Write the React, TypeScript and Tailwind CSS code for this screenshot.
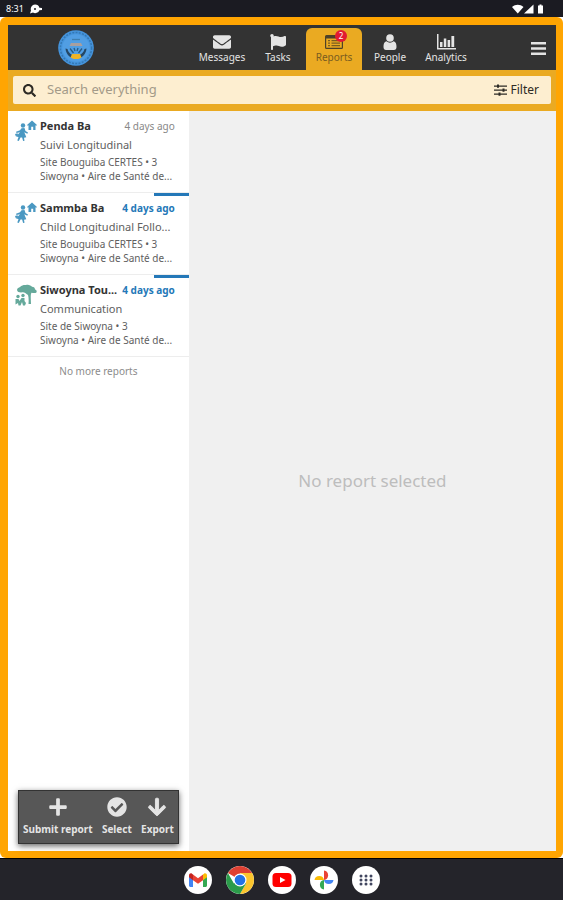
import type { ReactNode } from "react";
import { FaArrowDown, FaCheckCircle, FaEnvelope, FaFlag, FaPlus, FaSearch } from "react-icons/fa";
import clsx from "clsx";

const TABS = [
  { label: "Messages", icon: <FaEnvelope className="h-[18px] w-[18px]" /> },
  { label: "Tasks", icon: <FaFlag className="h-4 w-[18px]" /> },
  { label: "Reports", icon: <ReportsIcon />, badge: 2 },
  { label: "People", icon: <PersonIcon /> },
  { label: "Analytics", icon: <ChartIcon /> },
];

const REPORTS = [
  {
    name: "Penda Ba",
    form: "Suivi Longitudinal",
    place: "Site Bouguiba CERTES • 3",
    area: "Siwoyna • Aire de Santé de...",
    icon: <HomeVisitIcon />,
    unread: false,
  },
  {
    name: "Sammba Ba",
    form: "Child Longitudinal Follo...",
    place: "Site Bouguiba CERTES • 3",
    area: "Siwoyna • Aire de Santé de...",
    icon: <HomeVisitIcon />,
    unread: true,
  },
  {
    name: "Siwoyna Tou...",
    form: "Communication",
    place: "Site de Siwoyna • 3",
    area: "Siwoyna • Aire de Santé de...",
    icon: <CommunityIcon />,
    unread: true,
  },
];

const ACTIONS = [
  { label: "Submit report", icon: <FaPlus className="h-5 w-5" /> },
  { label: "Select", icon: <FaCheckCircle className="h-5 w-5" /> },
  { label: "Export", icon: <ArrowIcon /> },
];

const DOCK = [
  { label: "Gmail", icon: <GmailIcon /> },
  { label: "Chrome", icon: <ChromeIcon /> },
  { label: "YouTube", icon: <YouTubeIcon /> },
  { label: "Photos", icon: <PhotosIcon /> },
  { label: "All apps", icon: <AppsIcon /> },
];

function ArrowIcon() {
  return <FaArrowDown className="h-5 w-5" stroke="currentColor" strokeWidth="24" />;
}

function ReportsIcon() {
  return (
    <svg viewBox="0 0 18 16" className="h-4 w-[18px]" aria-hidden>
      <path
        fill="#4d4128"
        fillRule="evenodd"
        d="M1.5 1h15A1.5 1.5 0 0 1 18 2.5v11a1.5 1.5 0 0 1-1.5 1.5h-15A1.5 1.5 0 0 1 0 13.5v-11A1.5 1.5 0 0 1 1.5 1ZM1.2 4.5v9.3h15.6V4.5Z"
      />
      <path fill="#7a5d20" d="M3 6h2v1.2H3zM3 8.500h2v1.200H3zM3 11h2v1.200H3zM6.500 6H15v1.200H6.500zM6.500 8.500H15v1.200H6.500zM6.500 11H15v1.200H6.500z" />
    </svg>
  );
}

function PersonIcon() {
  return (
    <svg viewBox="0 0 14 16" className="h-4 w-3.5" fill="currentColor" aria-hidden>
      <circle cx="7" cy="4" r="3.8" />
      <path d="M3.5 7.2C1 7.6.5 10 .5 13c0 1.700 1 3 2.500 3h8c1.500 0 2.500-1.300 2.500-3 0-3-.5-5.400-3-5.800a5 5 0 0 1-7 0Z" />
    </svg>
  );
}

function ChartIcon() {
  return (
    <svg viewBox="0 0 19 16" className="h-4 w-[19px]" fill="currentColor" aria-hidden>
      <path d="M0 0h1.500v14H19v1.500H0zM3 8h2.500v5H3zM6.800 4.500h2.500V13H6.800zM10.600 6h2.500v7h-2.500zM14.400 2h2.800v11h-2.800z" />
    </svg>
  );
}

function HomeVisitIcon() {
  return (
    <svg viewBox="0 0 22 24" className="h-6 w-[22px]" fill="#4a98c2" aria-hidden>
      <path d="M17 .5l5 4.500-.8.800-.7-.5V10h-2.300V6.800h-2V10H13.500V5.300l-.7.500L12 5z" />
      <circle cx="8" cy="5.5" r="2.2" />
      <path d="M6.500 8.200l3-.2 1 3 2.500 1.500-.7 1.300-3-1.500 2 5-2.300.4.500 3-1.400.3-1-3.500H5.500L3.800 21l-1.500-.4 1.200-3.600-2.500-.5 4-4.300-3.500.8L1 11.700l4-1.400z" />
      <path d="M0 14l2.500-.7.7 2-2.400 1z" />
    </svg>
  );
}

function CommunityIcon() {
  return (
    <svg viewBox="0 0 22 22" className="h-[22px] w-[22px]" fill="#65a99b" aria-hidden>
      <path d="M2 6c0-2 2-2.500 3-3C7 1 9 .8 11 1c2-1 5 .2 6 1.800 2 0 3 1.400 3 2.700 2 .5 2.300 3 .5 3.500-2 .4-3-.5-4-.3-1 1.500-.8 4-.5 11.300h-2.500c.3-4 .2-7-.5-9C11 9.500 9.500 8.500 8 8.300 5 8.500 2.500 8.500 2 6Z" />
      <circle cx="3" cy="12.5" r="1.7" />
      <circle cx="8" cy="11.5" r="1.7" />
      <path d="M.5 15h3l1 2 2-3h3v3l1.500 2-1 2.500h-2L7 18l-1.500 3.500h-2L3 19l-2.500 1.500z" />
    </svg>
  );
}

function CrestLogo() {
  return (
    <svg viewBox="0 0 36 36" className="h-9 w-9" role="img" aria-label="Home">
      <circle cx="18" cy="18" r="17.8" fill="#4594dc" />
      <circle cx="18" cy="18" r="15.6" fill="none" stroke="#3478b4" strokeWidth="1.5" strokeDasharray="2 1.3" />
      <circle cx="18" cy="18" r="13.8" fill="#519ee3" />
      <path d="M14 9.500h8" stroke="#3f7eae" strokeWidth="1.3" />
      <path d="M13 13h10l1.500 3h-13z" fill="#a99f9f" />
      <path d="M7.500 18.500c.5 6 4.500 10 10.500 10s10-4 10.500-10l-2 .5c-1 4-4 6.500-8.500 6.500S10.500 23 9.500 19Z" fill="#244765" />
      <path d="M12 18.500l3.500 4.500M24 18.500L20.500 23M16 18l1 3M20 18l-1 3" stroke="#285a83" strokeWidth="1.3" />
      <path d="M14 24h8l1.500 3.500-3 1.500h-5l-3-1.500z" fill="#efb428" />
    </svg>
  );
}

function FilterIcon() {
  return (
    <svg viewBox="0 0 13 12" className="h-3 w-[13px]" fill="currentColor" aria-hidden>
      <path d="M0 1.500h13v1.200H0zM0 5.500h13v1.200H0zM0 9.500h13v1.200H0z" />
      <path d="M3 .5h2v3.200H3zM8.500 4.500h2v3.200h-2zM4.500 8.500h2v3.200h-2z" />
    </svg>
  );
}

function GmailIcon() {
  return (
    <svg viewBox="0 0 28 28" className="h-7 w-7" aria-hidden>
      <path d="M5 10v9.500c0 .8.7 1.500 1.500 1.500H9v-9z" fill="#4285f4" />
      <path d="M23 10v9.500c0 .8-.7 1.500-1.500 1.500H19v-9z" fill="#34a853" />
      <path d="M9 8.500v5.700l5 3.600 5-3.600V8.500l-5 3.800z" fill="#ea4335" />
      <path d="M5 9.500v1.700l4 3V8.500L8 7.700C6.700 6.800 5 7.800 5 9.500Z" fill="#c5221f" />
      <path d="M23 9.500v1.700l-4 3V8.500l1-.8c1.300-.9 3 .1 3 1.800Z" fill="#fbbc04" />
    </svg>
  );
}

function ChromeIcon() {
  return (
    <svg viewBox="0 0 28 28" className="h-7 w-7" aria-hidden>
      <path d="M14 14L1.900 7a14 14 0 0 1 24.200 0z" fill="#de4032" />
      <path d="M14 14V7h12.100A14 14 0 0 1 14 28l6-10.500z" fill="#fbc52d" />
      <path d="M14 14l6 3.500L14 28A14 14 0 0 1 1.900 7l6 10.500z" fill="#2b9b4a" />
      <circle cx="14" cy="14" r="6.5" fill="#fff" />
      <circle cx="14" cy="14" r="5.3" fill="#2272e5" />
    </svg>
  );
}

function YouTubeIcon() {
  return (
    <svg viewBox="0 0 28 28" className="h-7 w-7" aria-hidden>
      <rect x="4.5" y="7" width="19" height="14" rx="3.5" fill="#f00" />
      <path d="M12 11l5.500 3-5.500 3z" fill="#fff" />
    </svg>
  );
}

function PhotosIcon() {
  return (
    <svg viewBox="0 0 28 28" className="h-7 w-7" aria-hidden>
      <path d="M14 14V4.500a4.800 4.800 0 0 1 0 9.500Z" fill="#ea4335" />
      <path d="M14 14h9.500a4.800 4.800 0 0 1-9.500 0Z" fill="#4285f4" />
      <path d="M14 14v9.500a4.800 4.800 0 0 1 0-9.500Z" fill="#34a853" />
      <path d="M14 14H4.500a4.800 4.800 0 0 1 9.500 0Z" fill="#fbbc04" />
    </svg>
  );
}

function AppsIcon() {
  return (
    <svg viewBox="0 0 28 28" className="h-7 w-7" fill="#41465f" aria-hidden>
      {[10, 14, 18].map((y) =>
        [9, 14, 19].map((x) => <circle key={`${x}-${y}`} cx={x} cy={y} r="1.5" />),
      )}
    </svg>
  );
}

function StatusBar() {
  return (
    <div className="flex h-[17px] shrink-0 items-center justify-between bg-[#1b1b22] pr-[18px] pl-1.5 text-white">
      <div className="flex items-center gap-1.5">
        <span className="text-[9px] leading-4">8:31</span>
        <svg viewBox="0 0 12 10" className="h-2.5 w-3" fill="currentColor" aria-hidden>
          <path d="M5 .5a4.500 4.500 0 0 1 4.400 3.300L12 4v2l-2.600.2A4.500 4.500 0 0 1 3 8.600L0 9.500l1-3A4.500 4.500 0 0 1 5 .5Z" />
          <circle cx="5" cy="5" r="1" fill="#1b1b22" />
        </svg>
      </div>
      <svg viewBox="0 0 33 10" className="h-2.5 w-[33px]" fill="currentColor" aria-hidden>
        <path d="M0 3c3.500-3 8-3 11.500 0L5.750 9.500zM21.500.5v9H12zM26 1.500h1.500V.5h2v1H31v8h-5z" />
      </svg>
    </div>
  );
}

function Header() {
  return (
    <header className="flex h-[45px] shrink-0 items-stretch bg-[#333] pr-2.5">
      <a href="#home" className="flex w-[136px] items-center justify-center">
        <CrestLogo />
      </a>
      <nav className="ml-[50px] flex pt-[3px]">
        {TABS.map((tab) => (
          <Tab key={tab.label} label={tab.label} badge={tab.badge} active={tab.label === "Reports"}>
            {tab.icon}
          </Tab>
        ))}
      </nav>
      <button type="button" aria-label="Menu" className="ml-auto flex w-8 items-center justify-end pt-0.5 text-[#e4e4e4]">
        <svg viewBox="0 0 15 13" className="h-[13px] w-[15px]" fill="currentColor" aria-hidden>
          <path d="M0 0h15v2.500H0zM0 5.200h15v2.500H0zM0 10.400h15v2.500H0z" />
        </svg>
      </button>
    </header>
  );
}

type TabProps = { label: string; badge?: number; active: boolean; children: ReactNode };

function Tab({ label, badge, active, children }: TabProps) {
  return (
    <a
      href={`#${label.toLowerCase()}`}
      aria-current={active ? "page" : undefined}
      className={clsx(
        "flex w-14 flex-col items-center rounded-t-md pt-1 text-[10px] leading-3",
        active ? "bg-[#eaaa22] text-[#7a5d20]" : "text-[#e4e4e4]",
      )}
    >
      <span className="relative flex h-[19px] items-center">
        {children}
        {badge && (
          <span className="absolute -top-0.5 -right-1 flex h-3 w-3 items-center justify-center rounded-full bg-[#e11b32] text-[8px] leading-3 text-white">
            {badge}
          </span>
        )}
      </span>
      {label}
    </a>
  );
}

function SearchBar() {
  return (
    <div className="h-[41px] shrink-0 bg-[#eaaa22] px-[5px] pt-1.5">
      <div className="flex h-7 items-center rounded-xs bg-[#fdeed0] pr-3 pl-2.5 text-[#2d2a25]">
        <FaSearch className="h-[13px] w-[13px]" />
        <input
          type="search"
          aria-label="Search everything"
          placeholder="Search everything"
          className="ml-[11px] min-w-0 flex-1 bg-transparent text-[13px] placeholder:text-[#a39a89] focus:outline-none"
        />
        <button type="button" className="flex items-center gap-1 text-xs">
          <FilterIcon />
          Filter
        </button>
      </div>
    </div>
  );
}

function ReportList() {
  return (
    <aside className="flex w-[33%] shrink-0 flex-col bg-white">
      <ul>
        {REPORTS.map((report) => (
          <li key={report.name} className="relative border-b border-[#ededed]">
            {report.unread && <span className="absolute top-0 right-0 h-[3px] w-[35px] bg-[#2478b8]" />}
            <a href="#report" className="flex h-[81px] gap-[3px] pt-[5px] pr-3.5 pl-[7px]">
              <span className="w-[22px] shrink-0 pt-1">{report.icon}</span>
              <div className="min-w-0 flex-1 whitespace-nowrap text-[#606060]">
                <div className="flex items-center justify-between leading-5">
                  <h2 className="text-[11px] font-bold text-[#333]">{report.name}</h2>
                  <time className={clsx("text-[10px]", report.unread ? "font-bold text-[#2478b8]" : "text-[#888]")}>
                    4 days ago
                  </time>
                </div>
                <p className="text-[11px] leading-[18px]">{report.form}</p>
                <p className="pt-px text-[10px] leading-[14px]">{report.place}</p>
                <p className="text-[10px] leading-[14px]">{report.area}</p>
              </div>
            </a>
          </li>
        ))}
      </ul>
      <p className="pt-1.5 text-center text-[10px] leading-4 text-[#8c8c8c]">No more reports</p>
      <div className="mx-2.5 mt-auto mb-[7px] flex h-[54px] justify-between border border-[#333] bg-[#575757] px-1 shadow-[0_2px_6px_rgba(0,0,0,0.6)]">
        {ACTIONS.map((action) => (
          <button
            key={action.label}
            type="button"
            className="flex flex-col items-center gap-1 pt-1.5 text-[10px] leading-4 font-bold whitespace-nowrap text-[#e4e4e4]"
          >
            {action.icon}
            {action.label}
          </button>
        ))}
      </div>
    </aside>
  );
}

export default function App() {
  return (
    <div className="flex min-h-screen flex-col bg-[#24242a] font-['Noto_Sans',sans-serif]">
      <StatusBar />
      <div className="flex flex-1 bg-white">
        <div className="flex flex-1 flex-col rounded-md bg-[#ffa502] p-[7px] pt-2 pl-2">
          <Header />
          <SearchBar />
          <main className="flex flex-1 bg-[#f0f0f0]">
            <ReportList />
            <section className="flex flex-1 items-center justify-center text-[17px] text-[#bdbdbd]">
              No report selected
            </section>
          </main>
        </div>
      </div>
      <footer className="flex h-[42px] shrink-0 items-center justify-center gap-3.5 border-t border-black">
        {DOCK.map((app) => (
          <button key={app.label} type="button" aria-label={app.label} className="rounded-full bg-white">
            {app.icon}
          </button>
        ))}
      </footer>
    </div>
  );
}
